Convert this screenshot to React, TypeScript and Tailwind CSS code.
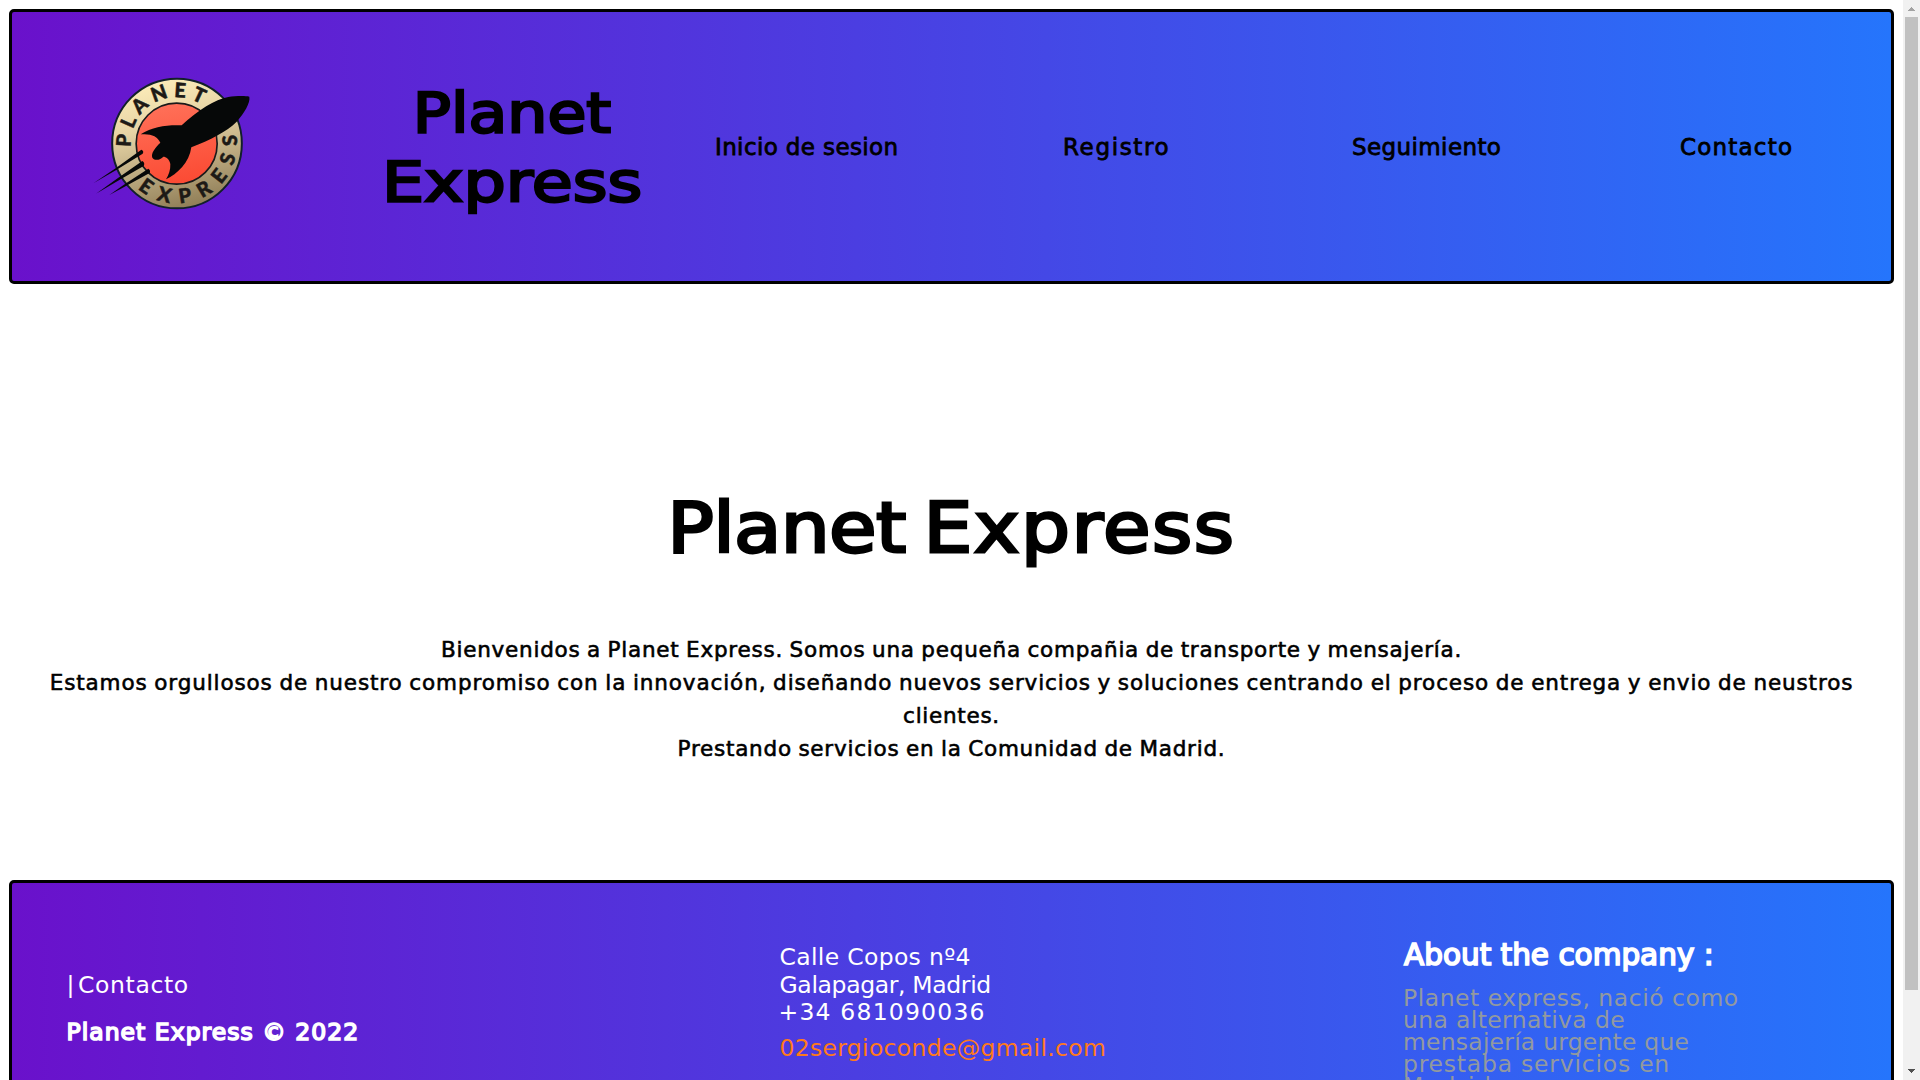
const GRADIENT = "border-[3px] border-black bg-linear-to-r/srgb from-[#6a11cb] to-[#2575fc]";

function Logo() {
  return (
    <svg viewBox="0 0 570 480" className="h-[160px] w-[190px] shrink-0">
      <defs>
        <linearGradient id="ring" x1="0.35" y1="0" x2="0.6" y2="1">
          <stop offset="0" stopColor="#fdedba" />
          <stop offset="0.35" stopColor="#e6d3a4" />
          <stop offset="0.7" stopColor="#b7a57c" />
          <stop offset="1" stopColor="#8f7d56" />
        </linearGradient>
        <linearGradient id="planet" x1="0.4" y1="0" x2="0.6" y2="1">
          <stop offset="0" stopColor="#ff7058" />
          <stop offset="1" stopColor="#fb4a33" />
        </linearGradient>
        <path id="arcTop" d="M153 261A138 138 0 0 1 384 148" />
        <path id="arcBottom" d="M172.900 385.800A180 180 0 0 0 467 212" />
      </defs>
      <circle cx="291" cy="250.500" r="194.500" fill="url(#ring)" stroke="#12202a" strokeWidth="6" />
      <circle cx="290" cy="251" r="121.500" fill="url(#planet)" stroke="#1a1a1a" strokeWidth="5" />
      <g fill="#1d1a16" stroke="#1d1a16" strokeWidth="1.500" fontFamily="Lato, sans-serif" fontWeight="900" fontSize="60">
        <text textLength="306">
          <textPath href="#arcTop" textLength="306">PLANET</textPath>
        </text>
        <text textLength="438">
          <textPath href="#arcBottom" textLength="438">EXPRESS</textPath>
        </text>
      </g>
      <g fill="#060808">
        <path d="M508 110C495 107 465 108 445 111C405 118 355 150 305 196C262 194 218 200 182 223C212 220 232 228 241 248C226 262 212 280 217 293C225 304 241 300 250 290C258 290 268 297 271 312C272 330 266 345 258 358C292 342 328 308 334 262C390 240 440 215 470 185C492 160 512 128 508 110Z" />
        <path d="M184 269Q193 273 188 281L110 329L40 370L108 324Z" />
        <path d="M187 303Q196 309 191 318L118 360L48 401L114 354Z" />
        <path d="M205 326Q213 331 209 339L142 376L88 405L136 371Z" />
      </g>
    </svg>
  );
}

function Header() {
  return (
    <header className={`flex h-[275px] items-start rounded-[5px] ${GRADIENT}`}>
      <div className="ml-[68px] mt-[48px]">
        <Logo />
      </div>
      <h2 className="mt-[65.5px] w-[444px] pl-[40px] text-center text-[56px] leading-[69.5px] [-webkit-text-stroke:2.5px_black]">
        <span className="block scale-x-[1.13]">Planet</span>
        <span className="block scale-x-[1.19]">Express</span>
      </h2>
      <nav className="mt-[121px] flex pl-px text-[23px] leading-7 whitespace-nowrap [-webkit-text-stroke:0.8px_black]">
        <a className="w-[348px] tracking-[0.38px]">Inicio de sesion</a>
        <a className="w-[289px] tracking-[1.65px]">Registro</a>
        <a className="w-[328px] tracking-[0.4px]">Seguimiento</a>
        <a className="tracking-[1.2px]">Contacto</a>
      </nav>
    </header>
  );
}

function Welcome() {
  return (
    <main className="mt-[201px] text-center">
      <h1 className="scale-x-[1.12] text-[69px] leading-[86px] [word-spacing:-6px] [-webkit-text-stroke:2.8px_black]">
        <span className="tracking-[-0.6px]">Planet</span> <span className="tracking-[1.33px]">Express</span>
      </h1>
      <p className="mt-[62px] text-[21.5px] leading-[33px] whitespace-nowrap [word-spacing:-1px] [-webkit-text-stroke:0.6px_black]">
        <span className="block tracking-[0.76px]">
          Bienvenidos a Planet Express. Somos una pequeña compañia de transporte y mensajería.
        </span>
        <span className="block tracking-[0.887px]">
          Estamos orgullosos de nuestro compromiso con la innovación, diseñando nuevos servicios y soluciones
          centrando el proceso de entrega y envio de neustros
        </span>
        <span className="block tracking-[0.72px]">clientes.</span>
        <span className="block tracking-[0.76px]">Prestando servicios en la Comunidad de Madrid.</span>
      </p>
    </main>
  );
}

function Footer() {
  return (
    <footer
      className={`mt-[115px] flex h-[320px] items-start rounded-[5px] text-[23.5px] leading-[27.5px] whitespace-nowrap text-white ${GRADIENT}`}
    >
      <div className="ml-[54.5px] mt-[89px] w-[713px]">
        <p className="tracking-[0.6px] [word-spacing:-5px]">| Contacto</p>
        <p className="mt-[19.5px] tracking-[1.03px] [-webkit-text-stroke:1.6px_white]">Planet Express © 2022</p>
      </div>
      <div className="mt-[61px] w-[624.5px]">
        <p className="tracking-[0.32px]">Calle Copos nº4</p>
        <p className="tracking-[-0.36px]">Galapagar, Madrid</p>
        <p className="-ml-px tracking-[1.2px]">+34 681090036</p>
        <p className="mt-[8.5px] tracking-[0.3px] text-[#ff7a1a]">02sergioconde@gmail.com</p>
      </div>
      <div className="mt-[54px]">
        <h3 className="text-[29.5px] leading-9 [-webkit-text-stroke:1.7px_white]">About the company :</h3>
        <p className="-ml-px mt-3.5 leading-[22px] text-[#92999f]">
          <span className="block tracking-[0.52px]">Planet express, nació como</span>
          <span className="block tracking-[0.35px]">una alternativa de</span>
          <span className="block tracking-[0.2px]">mensajería urgente que</span>
          <span className="block tracking-[0.77px]">prestaba servicios en</span>
          <span className="block tracking-[1.44px]">Madrid</span>
        </p>
      </div>
    </footer>
  );
}

function Scrollbar() {
  return (
    <div className="flex h-full w-[17px] shrink-0 flex-col items-center justify-between bg-[#f1f1f1]">
      <svg viewBox="0 0 17 17" className="size-[17px] shrink-0" shapeRendering="crispEdges">
        <path d="M8 7h1v1h1v1h1v1h1v1H5v-1h1V9h1V8h1z" fill="#a3a3a3" />
      </svg>
      <div className="h-[973px] w-[13px] bg-[#c1c1c1]" />
      <div className="grow" />
      <svg viewBox="0 0 17 17" className="size-[17px] shrink-0" shapeRendering="crispEdges">
        <path d="M5 6h7v1h-1v1h-1v1H9v1H8V9H7V8H6V7H5z" fill="#505050" />
      </svg>
    </div>
  );
}

export default function App() {
  return (
    <div className="flex h-screen overflow-hidden bg-white font-['DejaVu_Sans',sans-serif] text-black">
      <div className="min-w-0 grow overflow-hidden p-[9px]">
        <Header />
        <Welcome />
        <Footer />
      </div>
      <Scrollbar />
    </div>
  );
}
